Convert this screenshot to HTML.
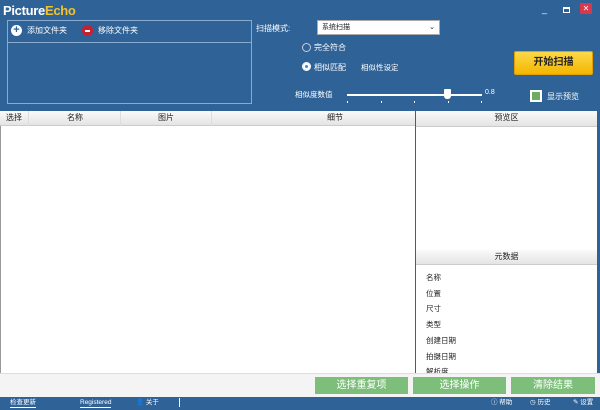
<!DOCTYPE html><html><head><meta charset="utf-8"><style>
*{margin:0;padding:0;box-sizing:border-box}
body{width:600px;height:410px;background:#2f6297;font-family:"Liberation Sans","Noto Sans CJK SC",sans-serif;font-size:8px;color:#222;position:relative;overflow:hidden}
.a{position:absolute}
.w{color:#fff}
.hd{background:linear-gradient(#fafafa,#e4e4e4);border-bottom:1px solid #ccc;text-align:center;line-height:14px;height:15px}
.btn{background:#7dbf7a;color:#fff;font-size:10px;text-align:center;line-height:17px;height:17px}
.t{position:absolute;top:101px;width:1px;height:2px;background:#fff}
</style></head><body>
<div class="a w" style="left:3px;top:3px;font-size:13px;font-weight:bold;letter-spacing:-0.3px">Picture<span style="color:#f2c230">Echo</span></div>
<div class="a w" style="left:542px;top:4px;font-size:9px">_</div>
<div class="a" style="left:563px;top:7px;width:7px;height:6px;border:1px solid #fff;border-top-width:2px"></div>
<div class="a w" style="left:580px;top:3px;width:12px;height:11px;background:#d9374b;text-align:center;font-size:8px;line-height:11px">✕</div>
<div class="a" style="left:7px;top:20px;width:245px;height:84px;border:1px solid #8aa9cf"></div>
<div class="a" style="left:7px;top:42px;width:245px;height:1px;background:#8aa9cf"></div>
<div class="a" style="left:11px;top:25px;width:11px;height:11px;border-radius:50%;background:#fff;color:#2f6297;font-size:11px;font-weight:bold;line-height:11px;text-align:center">+</div>
<div class="a w" style="left:27px;top:25px">添加文件夹</div>
<div class="a" style="left:82px;top:25px;width:11px;height:11px;border-radius:50%;background:#c8202e"><div style="margin:5px 3px;height:1.5px;background:#fff"></div></div>
<div class="a w" style="left:98px;top:25px">移除文件夹</div>
<div class="a w" style="left:256px;top:23px">扫描模式:</div>
<div class="a" style="left:317px;top:20px;width:123px;height:15px;background:#fff;border:1px solid #aaa;padding-left:4px;line-height:13px;font-size:7px">系统扫描<span style="float:right;margin-right:4px">⌄</span></div>
<div class="a" style="left:302px;top:43px;width:9px;height:9px;border:1px solid #ccd;border-radius:50%"></div>
<div class="a w" style="left:314px;top:42px">完全符合</div>
<div class="a" style="left:302px;top:62px;width:9px;height:9px;border:1px solid #fff;border-radius:50%;background:#2a8be0;box-shadow:inset 0 0 0 2px #fff"></div>
<div class="a w" style="left:314px;top:62px">相似匹配</div>
<div class="a w" style="left:361px;top:62px;font-size:7.5px">相似性设定</div>
<div class="a" style="left:514px;top:51px;width:79px;height:24px;background:linear-gradient(#fcd84a,#f3b600);border:1px solid #e2a000;border-radius:2px;text-align:center;line-height:22px;font-size:10px;font-weight:bold">开始扫描</div>
<div class="a w" style="left:295px;top:89px;font-size:7.5px">相似度数值</div>
<div class="a" style="left:347px;top:94px;width:135px;height:2px;background:#fff"></div>
<div class="t" style="left:347px"></div><div class="t" style="left:381px"></div><div class="t" style="left:414px"></div><div class="t" style="left:448px"></div><div class="t" style="left:481px"></div>
<div class="a" style="left:444px;top:89px;width:7px;height:10px;background:#fff;border-radius:1px 1px 3px 3px"></div>
<div class="a w" style="left:485px;top:89px;font-size:7px">0.8</div>
<div class="a" style="left:530px;top:90px;width:12px;height:12px;background:#6fab65;border:2px solid #fff"></div>
<div class="a w" style="left:547px;top:91px">显示预览</div>
<div class="a" style="left:0;top:111px;width:415px;height:262px;background:#fff;border-left:1px solid #999"></div>
<div class="a hd" style="left:0;top:111px;width:415px"></div>
<div class="a" style="left:6px;top:111px;line-height:14px">选择</div>
<div class="a" style="left:28px;top:111px;width:1px;height:15px;background:#ddd"></div>
<div class="a" style="left:67px;top:111px;line-height:14px">名称</div>
<div class="a" style="left:120px;top:111px;width:1px;height:15px;background:#ddd"></div>
<div class="a" style="left:158px;top:111px;line-height:14px">图片</div>
<div class="a" style="left:211px;top:111px;width:1px;height:15px;background:#ddd"></div>
<div class="a" style="left:327px;top:111px;line-height:14px">细节</div>
<div class="a" style="left:416px;top:111px;width:181px;height:262px;background:#fff"></div>
<div class="a hd" style="left:416px;top:111px;width:181px;height:16px">预览区</div>
<div class="a hd" style="left:416px;top:250px;width:181px">元数据</div>
<div class="a" style="left:426px;top:270px;line-height:15.7px;font-size:7.5px">名称<br>位置<br>尺寸<br>类型<br>创建日期<br>拍摄日期<br>解析度</div>
<div class="a" style="left:0;top:373px;width:600px;height:24px;background:#f4f4f4;border-top:1px solid #ddd"></div>
<div class="a btn" style="left:315px;top:377px;width:93px">选择重复项</div>
<div class="a btn" style="left:413px;top:377px;width:93px">选择操作</div>
<div class="a btn" style="left:511px;top:377px;width:84px">清除结果</div>
<div class="a w" style="left:10px;top:399px;font-size:6.5px;border-bottom:1px solid #fff;line-height:8px">检查更新</div>
<div class="a w" style="left:80px;top:399px;font-size:6.5px;border-bottom:1px solid #fff;line-height:8px">Registered</div>
<div class="a w" style="left:136px;top:399px;font-size:6.5px;line-height:8px">👤 关于</div>
<div class="a" style="left:179px;top:398px;width:1px;height:9px;background:#fff"></div>
<div class="a w" style="left:491px;top:399px;font-size:6.5px;line-height:8px">ⓘ 帮助</div>
<div class="a w" style="left:530px;top:399px;font-size:6.5px;line-height:8px">◷ 历史</div>
<div class="a w" style="left:573px;top:399px;font-size:6.5px;line-height:8px">✎ 设置</div>
</body></html>
